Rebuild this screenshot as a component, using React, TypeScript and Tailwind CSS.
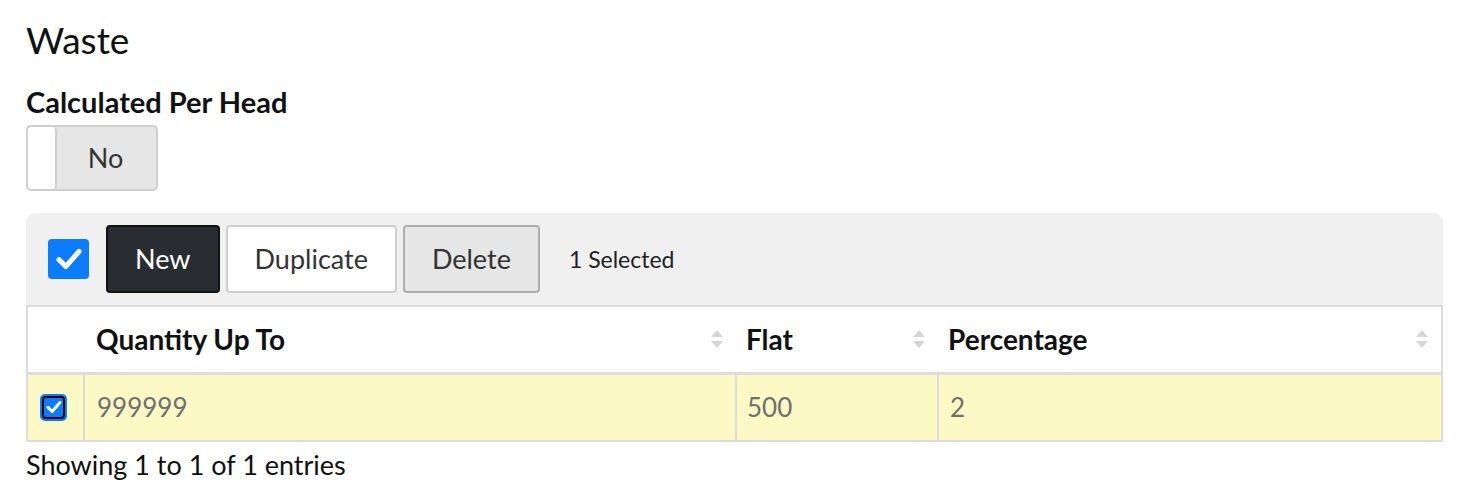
import { useState } from 'react'

type Tier = { id: number; qty: string; flat: string; pct: string }

const tiers: Tier[] = [{ id: 1, qty: '999999', flat: '500', pct: '2' }]

function SortIcon() {
  return (
    <svg width="14" height="20" viewBox="0 0 14 20" className="shrink-0">
      <path d="M7 1 L13 8 H1 Z" fill="#d6d6d6" />
      <path d="M7 19 L13 12 H1 Z" fill="#d6d6d6" />
    </svg>
  )
}

function Check({ size }: { size: number }) {
  return (
    <svg width={size} height={size} viewBox="0 0 24 24">
      <path d="M4 12.5 L9.5 18 L20 6" fill="none" stroke="#fff" strokeWidth="4" strokeLinecap="round" strokeLinejoin="round" />
    </svg>
  )
}

export default function App() {
  const [perHead, setPerHead] = useState(false)
  const [selected] = useState(1)

  return (
    <div className="min-h-screen bg-white pl-[26px] pt-[18px] font-['Lato','Liberation_Sans',sans-serif] text-[#111]">
      <h3 className="text-[37px] leading-[44px] font-normal">Waste</h3>
      <div className="mt-[24px] text-[29px] leading-[32px] font-bold">Calculated Per Head</div>
      <button
        onClick={() => setPerHead(!perHead)}
        className="mt-[7px] flex h-[66px] w-[132px] overflow-hidden rounded-[5px] border-2 border-[#cfcfcf] bg-[#e6e6e6]"
      >
        <span className="h-full w-[29px] rounded-[4px] border-r-2 border-[#cfcfcf] bg-white" />
        <span className="flex flex-1 items-center justify-center pr-[2px] text-[27px] text-[#333]">{perHead ? 'Yes' : 'No'}</span>
      </button>

      <div className="mt-[22px] w-[1417px] rounded-t-[9px] bg-[#f0f0f0]">
        <div className="flex h-[92px] items-center pl-[22px]">
          <span className="flex h-[40px] w-[41px] items-center justify-center rounded-[4px] bg-[#0a7cff]">
            <Check size={30} />
          </span>
          <button className="ml-[17px] h-[68px] rounded-[4px] border-2 border-[#111] bg-[#292d32] px-[27px] text-[27px] text-white">New</button>
          <button className="ml-[6px] h-[68px] rounded-[4px] border-2 border-[#cfcfcf] bg-white px-[27px] text-[27px] text-[#333]">Duplicate</button>
          <button className="ml-[6px] h-[68px] rounded-[4px] border-2 border-[#adadad] bg-[#e6e6e6] px-[27px] text-[27px] text-[#333]">Delete</button>
          <span className="ml-[29px] text-[23px] text-[#222]">{selected} Selected</span>
        </div>

        <table className="w-full border-collapse border-2 border-[#dcdcdc] bg-white text-[26px]">
          <thead>
            <tr className="h-[67px] border-b-[3px] border-[#dcdcdc] text-[28px]">
              <th className="w-[57px]" />
              <th className="w-[652px] pl-[12px] pr-[12px] text-left font-bold">
                <div className="flex items-center justify-between">Quantity Up To<SortIcon /></div>
              </th>
              <th className="w-[202px] pl-[10px] pr-[12px] text-left font-bold">
                <div className="flex items-center justify-between">Flat<SortIcon /></div>
              </th>
              <th className="pl-[10px] pr-[12px] text-left font-bold">
                <div className="flex items-center justify-between">Percentage<SortIcon /></div>
              </th>
            </tr>
          </thead>
          <tbody>
            {tiers.map((t) => (
              <tr key={t.id} className="h-[68px] bg-[#fdf9c4] text-[#6f6f6f]">
                <td className="border-r-2 border-[#dcdcdc] pl-[12px]">
                  <span className="flex h-[27px] w-[27px] items-center justify-center rounded-[5px] bg-[#0a7cff] p-[2px]">
                    <span className="flex h-full w-full items-center justify-center rounded-[4px] border-2 border-black bg-[#0a7cff]">
                      <Check size={18} />
                    </span>
                  </span>
                </td>
                <td className="border-r-2 border-[#dcdcdc] pl-[12px]">{t.qty}</td>
                <td className="border-r-2 border-[#dcdcdc] pl-[10px]">{t.flat}</td>
                <td className="pl-[11px]">{t.pct}</td>
              </tr>
            ))}
          </tbody>
        </table>
      </div>
      <div className="mt-[6px] text-[27px] leading-[34px] text-[#111]">Showing 1 to 1 of 1 entries</div>
    </div>
  )
}
